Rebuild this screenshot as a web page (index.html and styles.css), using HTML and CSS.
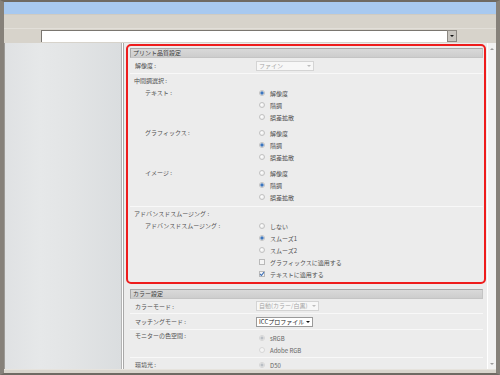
FILE: index.html
```html
<!DOCTYPE html>
<html lang="ja">
  <head>
    <meta charset="UTF-8" />
    <title>プリント品質設定</title>
    <link rel="stylesheet" href="styles.css">
  </head>
  <body>
    <div class="window">
      <div class="titlebar"></div>
      <div class="toolbar"></div>
      <div class="addressbar">
        <div class="address-pad"></div>
        <div class="address-input"></div>
        <div class="address-btn"><span class="arrow dark"></span></div>
      </div>
      <div class="content">
        <div class="sidebar"></div>
        <div class="main">
          <div class="section hl">
            <div class="section-head">プリント品質設定</div>
            <div class="row">
              <div class="label">解像度 :</div>
              <div class="select off w58"><span>ファイン</span><span class="arrow"></span></div>
            </div>
            <div class="group">
              <div class="group-title">中間調選択 :</div>
              <div class="sub">
                <div class="sublabel">テキスト :</div>
                <div class="options">
                  <div class="opt"><span class="radio on"></span>解像度</div>
                  <div class="opt"><span class="radio"></span>階調</div>
                  <div class="opt"><span class="radio"></span>誤差拡散</div>
                </div>
              </div>
              <div class="sub">
                <div class="sublabel">グラフィックス :</div>
                <div class="options">
                  <div class="opt"><span class="radio"></span>解像度</div>
                  <div class="opt"><span class="radio on"></span>階調</div>
                  <div class="opt"><span class="radio"></span>誤差拡散</div>
                </div>
              </div>
              <div class="sub">
                <div class="sublabel">イメージ :</div>
                <div class="options">
                  <div class="opt"><span class="radio"></span>解像度</div>
                  <div class="opt"><span class="radio on"></span>階調</div>
                  <div class="opt"><span class="radio"></span>誤差拡散</div>
                </div>
              </div>
            </div>
            <div class="group last">
              <div class="group-title">アドバンスドスムージング :</div>
              <div class="sub">
                <div class="sublabel">アドバンスドスムージング :</div>
                <div class="options">
                  <div class="opt"><span class="radio"></span>しない</div>
                  <div class="opt"><span class="radio on"></span>スムーズ1</div>
                  <div class="opt"><span class="radio"></span>スムーズ2</div>
                  <div class="opt"><span class="check"></span>グラフィックスに適用する</div>
                  <div class="opt">
                    <span class="check">
                      <svg width="6" height="6" viewBox="0 0 6 6"><path d="M1 3 L2.5 4.5 L5 1.2" fill="none" stroke="#3d6fb6" stroke-width="1.1"/></svg>
                    </span>テキストに適用する
                  </div>
                </div>
              </div>
            </div>
          </div>

          <div class="section second">
            <div class="section-head">カラー設定</div>
            <div class="row short">
              <div class="label">カラーモード :</div>
              <div class="select off w63"><span>自動(カラー/白黒)</span><span class="arrow"></span></div>
            </div>
            <div class="row">
              <div class="label">マッチングモード :</div>
              <div class="select w56"><span>ICCプロファイル</span><span class="arrow dark"></span></div>
            </div>
            <div class="row tall">
              <div class="label">モニターの色空間 :</div>
              <div class="options pad">
                <div class="opt dim"><span class="radio on off"></span>sRGB</div>
                <div class="opt dim"><span class="radio off"></span>Adobe RGB</div>
              </div>
            </div>
            <div class="row tall last">
              <div class="label">環境光 :</div>
              <div class="options">
                <div class="opt dim"><span class="radio on off"></span>D50</div>
              </div>
            </div>
          </div>
        </div>
        <div class="scrollbar">
          <span class="sb-up"></span>
          <span class="sb-down"></span>
        </div>
      </div>
      <div class="statusbar"></div>
    </div>
  </body>
</html>
```

FILE: styles.css
```css
* {
  margin: 0;
  padding: 0;
  box-sizing: border-box;
}
body {
  font-family: "Noto Sans CJK JP", "DejaVu Sans", sans-serif;
  font-size: 6px;
  color: #505050;
  background: #7c776f;
}
.window {
  width: 500px;
  height: 375px;
  display: flex;
  flex-direction: column;
  border-top: 2px solid #6f6a63;
  border-bottom: 2px solid #6f6a63;
  border-left: 4px solid #86817a;
  border-right: 4px solid #86817a;
  background: #d7d3cb;
  overflow: hidden;
}
.titlebar {
  height: 12px;
  background: #a8c9f0;
}
.toolbar {
  height: 14px;
  background: #d7d3cb;
  border-top: 1px solid #cfcbc3;
}
.addressbar {
  height: 15px;
  display: flex;
  padding: 1px 0 1px 0;
  background: #d7d3cb;
  border-top: 1px solid #e2dfd9;
}
.address-pad {
  width: 37px;
}
.address-input {
  width: 406px;
  background: #fff;
  border-top: 1px solid #7a7670;
  border-left: 1px solid #7a7670;
}
.address-btn {
  width: 10px;
  background: #c9c6c0;
  border: 1px solid #8c8882;
  display: flex;
  align-items: center;
  justify-content: center;
}
.content {
  flex: 1;
  display: flex;
  min-height: 0;
  background: #fff;
}
.sidebar {
  width: 118px;
  border-left: 1px solid #9c9a96;
  border-right: 1px solid #b4b4b4;
  background: linear-gradient(to right, #dfe1e3, #e6e8e9 30%, #e2e4e5 60%, #dadddf);
}
.main {
  width: 364px;
  margin-left: 1px;
  border-left: 1px solid #a9a9a9;
  background: #ececec;
  padding: 1px 1px 0 2px;
  overflow: hidden;
}
.scrollbar {
  width: 9px;
  background: #f2f2f2;
  border-left: 1px solid #fff;
  display: flex;
  flex-direction: column;
  justify-content: space-between;
  align-items: center;
  padding: 5px 0 4px;
}
.sb-up, .sb-down {
  width: 0;
  height: 0;
  border-left: 2px solid transparent;
  border-right: 2px solid transparent;
}
.sb-up {
  border-bottom: 2px solid #9a9a9a;
}
.sb-down {
  border-top: 2px solid #9a9a9a;
}
.statusbar {
  height: 4px;
  background: #d9d5cd;
  border-top: 1px solid #e6e3dd;
}

/* sections */
.section {
  border: 2px solid transparent;
  border-radius: 5px;
  padding: 2px 1px 0 2px;
}
.section.hl {
  border-color: #ee1c1c;
}
.section.second {
  margin-top: 1px;
}
.section-head {
  height: 10px;
  line-height: 8px;
  padding-left: 2px;
  border: 1px solid #a9a9a9;
  border-bottom-color: #c4c4c4;
  border-right-color: #c4c4c4;
  background: linear-gradient(#d9d9d9, #cdcdcd);
  color: #3c3c3c;
}
.row {
  display: flex;
  align-items: center;
  height: 16px;
  padding-left: 5px;
  border-bottom: 1px solid #f8f8f8;
}
.row.short {
  height: 15px;
}
.row.tall {
  height: 28px;
  align-items: flex-start;
  padding-bottom: 1px;
}
.row.tall .label {
  line-height: 12px;
}
.row.last {
  border-bottom: none;
  padding-top: 1px;
}
.label {
  width: 121px;
}
.group {
  padding: 1px 0 3px 4px;
  border-bottom: 1px solid #f8f8f8;
}
.group.last {
  border-bottom: none;
  padding-bottom: 2px;
}
.group-title {
  line-height: 12px;
}
.sub {
  display: flex;
  margin-bottom: 4px;
}
.sub:last-child {
  margin-bottom: 0;
}
.sublabel {
  width: 122px;
  padding-left: 11px;
  line-height: 12px;
}
.options.pad {
  padding-top: 2px;
}
.opt {
  height: 12px;
  display: flex;
  align-items: center;
  padding-left: 3px;
}
.opt.dim {
  color: #666;
}

/* controls */
.radio {
  width: 6px;
  height: 6px;
  margin-right: 5px;
  border-radius: 50%;
  border: 1px solid #c2c2c2;
  background: radial-gradient(circle at 40% 40%, #ffffff, #e4e4e4);
}
.radio.on {
  background: radial-gradient(circle, #2f68b3 0, #4a82c8 1.4px, #dfe6ef 1.9px, #eeeeee);
}
.radio.off {
  border-color: #d6d6d6;
  background: #f4f4f4;
}
.radio.on.off {
  background: radial-gradient(circle, #b9bec4 0, #b9bec4 1.3px, #f2f2f2 1.9px);
}
.check {
  width: 6px;
  height: 6px;
  margin-right: 5px;
  border: 1px solid #b9b9b9;
  background: #f5f5f5;
  display: flex;
  align-items: center;
  justify-content: center;
}
.check svg {
  flex: none;
}
.select {
  height: 10px;
  display: flex;
  align-items: center;
  justify-content: space-between;
  padding: 0 2px 0 2px;
  border: 1px solid #9a9a9a;
  background: #fff;
  color: #222;
  line-height: 8px;
  white-space: nowrap;
}
.select.off {
  border-color: #d4d4d4;
  background: #f7f7f7;
  color: #a6a6a6;
}
.w58 { width: 58px; }
.w63 { width: 63px; }
.w56 { width: 57px; }
.arrow {
  width: 0;
  height: 0;
  border-left: 2px solid transparent;
  border-right: 2px solid transparent;
  border-top: 2px solid #bdbdbd;
}
.arrow.dark {
  border-top-color: #111;
}
```
